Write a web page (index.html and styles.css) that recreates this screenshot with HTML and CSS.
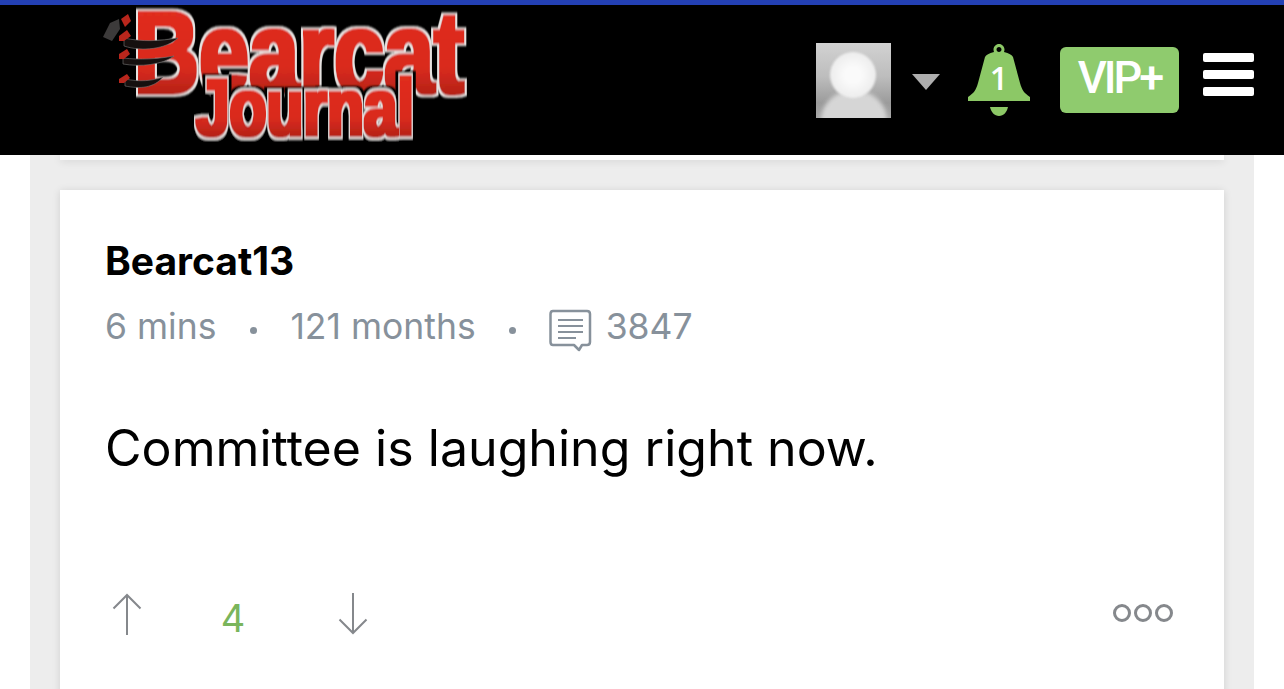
FILE: index.html
```html
<!DOCTYPE html>
<html lang="en">
<head>
    <meta charset="UTF-8">
    <meta name="viewport" content="width=device-width, initial-scale=1.0">
    <title>Bearcat Journal</title>
    <link rel="stylesheet" href="styles.css">
</head>
<body>
    <header class="site-header">
        <a class="logo" href="#">
            <svg width="380" height="150" viewBox="0 0 380 150">
                <defs>
                    <linearGradient id="logoRed" x1="0" y1="0" x2="0" y2="1">
                        <stop offset="0" stop-color="#e22d1f"/>
                        <stop offset="0.6" stop-color="#d92a1e"/>
                        <stop offset="1" stop-color="#92190f"/>
                    </linearGradient>
                    <filter id="logoEdge" x="-5%" y="-10%" width="110%" height="120%">
                        <feMorphology in="SourceGraphic" operator="dilate" radius="3 2" result="fat"/>
                        <feMorphology in="SourceAlpha" operator="dilate" radius="5 4" result="edge"/>
                        <feFlood flood-color="#e6e2e0"/>
                        <feComposite in2="edge" operator="in" result="white"/>
                        <feMerge result="all">
                            <feMergeNode in="white"/>
                            <feMergeNode in="fat"/>
                        </feMerge>
                        <feGaussianBlur in="all" stdDeviation="0.800"/>
                    </filter>
                    <filter id="logoEdgeDark" x="-8%" y="-15%" width="116%" height="130%">
                        <feMorphology in="SourceGraphic" operator="dilate" radius="2.500 1.500" result="fat"/>
                        <feMorphology in="SourceAlpha" operator="dilate" radius="4.500 3.500" result="edge"/>
                        <feMorphology in="SourceAlpha" operator="dilate" radius="8 6" result="outer"/>
                        <feFlood flood-color="#e6e2e0"/>
                        <feComposite in2="edge" operator="in" result="white"/>
                        <feFlood flood-color="#000"/>
                        <feComposite in2="outer" operator="in" result="black"/>
                        <feMerge result="all">
                            <feMergeNode in="black"/>
                            <feMergeNode in="white"/>
                            <feMergeNode in="fat"/>
                        </feMerge>
                        <feGaussianBlur in="all" stdDeviation="0.800"/>
                    </filter>
                </defs>
                <text class="logo-word" transform="translate(34 88) scale(0.775 1)">Bearcat</text>
                <text class="logo-word logo-word-small" transform="translate(96 130) scale(0.755 1)">Journal</text>
                <g class="logo-claws">
                    <path d="M24 33 C42 37 60 36 78 33 C66 44 42 47 24 41Z"/>
                    <path d="M23 53 C40 55 58 54 74 51 C62 60 40 62 23 59Z"/>
                    <path d="M25 74 C40 77 52 76 63 72 C54 83 40 84 25 81Z"/>
                </g>
                <path class="logo-smudge" d="M3 32 L10 18 L19 14 L20 24 L12 36Z"/>
                <path class="logo-nail" d="M21 14 L28 9 L31 16 L25 22Z"/>
                <path class="logo-nail" d="M19 31 L27 25 L31 31 L24 36 L19 36Z"/>
                <path class="logo-nail" d="M19 49 L27 44 L30 49 L24 54 L19 54Z"/>
                <path class="logo-nail" d="M19 74 L27 69 L30 73 L24 78 L19 78Z"/>
            </svg>
        </a>
        <div class="header-right">
            <div class="avatar"><div class="avatar-body"></div><div class="avatar-head"></div></div>
            <div class="caret"></div>
            <svg class="bell" width="62" height="72" viewBox="0 0 62 72">
                <path fill="#8cc866" fill-rule="evenodd" d="M31 0 C34 0 36.500 2.500 36.500 5.500 C36.500 6.500 36.300 7.300 36 8 C41 9 44 11 45 13 L52 39 C54 46 56 49 62 53 L62 57 L0 57 L0 53 C6 49 8 46 10 39 L17 13 C18 11 21 9 26 8 C25.700 7.300 25.500 6.500 25.500 5.500 C25.500 2.500 28 0 31 0Z M31 3 C29.600 3 28.500 4.100 28.500 5.500 C28.500 6.900 29.600 8 31 8 C32.400 8 33.500 6.900 33.500 5.500 C33.500 4.100 32.400 3 31 3Z"/>
                <path fill="#8cc866" d="M22 63 L40 63 C39 68 35.500 72 31 72 C26.500 72 23 68 22 63Z"/>
                <text class="bell-count" x="31" y="46" text-anchor="middle">1</text>
            </svg>
            <a class="vip" href="#">VIP+</a>
            <div class="hamburger"><span></span><span></span><span></span></div>
        </div>
    </header>

    <main class="content">
        <div class="card card-prev"></div>
        <article class="card">
            <div class="post-author">Bearcat13</div>
            <div class="post-meta">
                <span>6 mins</span>
                <i class="dot"></i>
                <span>121 months</span>
                <i class="dot"></i>
                <svg class="comment-icon" width="43" height="43" viewBox="0 0 43 43">
                    <path fill="none" stroke="#87919b" stroke-width="2.500" stroke-linejoin="round" d="M4 2 H38 Q41 2 41 5 V33 Q41 36 38 36 H33 L30 41 L25 36 H4 Q1.500 36 1.500 33 V5 Q1.500 2 4 2Z"/>
                    <path fill="none" stroke="#87919b" stroke-width="2" d="M9 11 H34 M9 17 H34 M9 23 H34 M9 29 H27"/>
                </svg>
                <span>3847</span>
            </div>
            <p class="post-body">Committee is laughing right now.</p>
            <div class="post-actions">
                <div class="votes">
                    <svg width="30" height="42" viewBox="0 0 30 42"><path fill="none" stroke="#85888c" stroke-width="2" d="M15 42 V2 M1.500 15.500 L15 2 L28.500 15.500"/></svg>
                    <span class="score">4</span>
                    <svg width="30" height="42" viewBox="0 0 30 42"><path fill="none" stroke="#85888c" stroke-width="2" d="M15 0 V40 M1.500 26.500 L15 40 L28.500 26.500"/></svg>
                </div>
                <div class="more"><i></i><i></i><i></i></div>
            </div>
        </article>
    </main>
</body>
</html>
```

FILE: styles.css
```css
html, body {
    margin: 0;
    padding: 0;
    height: 689px;
    overflow: hidden;
    background: #fff;
}
body {
    font-family: Inter, Lato, sans-serif;
    color: #000;
}
.site-header {
    height: 150px;
    border-top: 5px solid #2340b4;
    background: #000;
    display: flex;
    align-items: center;
    justify-content: space-between;
    padding-right: 30px;
    position: relative;
    z-index: 2;
}
.logo {
    display: block;
    margin-left: 100px;
    height: 150px;
}
.logo-word {
    font-family: "Liberation Sans", Arial, sans-serif;
    font-weight: 700;
    font-size: 116px;
    fill: url(#logoRed);
    filter: url(#logoEdge);
}
.logo-word-small {
    font-size: 80px;
    filter: url(#logoEdgeDark);
}
.logo-claws path {
    fill: #16100f;
    stroke: #777;
    stroke-width: 0.600px;
}
.logo-nail {
    fill: #b8261c;
}
.logo-smudge {
    fill: #3c3a3a;
}
.header-right {
    display: flex;
    align-items: center;
}
.avatar {
    width: 75px;
    height: 75px;
    margin-top: 1px;
    position: relative;
    overflow: hidden;
    background: linear-gradient(180deg, #d2d2d2, #bdbdbd 45%, #9b9b9b 80%, #a8a8a8);
}
.avatar-head {
    position: absolute;
    left: 14px;
    top: 9px;
    width: 46px;
    height: 46px;
    border-radius: 50%;
    background: radial-gradient(circle, #fafafa 25%, #e4e4e4 100%);
    filter: blur(1px);
}
.avatar-body {
    position: absolute;
    left: 5px;
    top: 47px;
    width: 66px;
    height: 60px;
    border-radius: 50%;
    background: #d6d6d6;
    filter: blur(2px);
}
.caret {
    width: 0;
    height: 0;
    margin-left: 21px;
    margin-right: 28px;
    margin-top: 3px;
    border-left: 14px solid transparent;
    border-right: 14px solid transparent;
    border-top: 16px solid #aeaeae;
}
.bell {
    display: block;
    margin-right: 30px;
}
.bell-count {
    font-family: "Open Sans", sans-serif;
    font-weight: 600;
    font-size: 32px;
    fill: #fff;
}
.vip {
    display: block;
    width: 119px;
    height: 66px;
    line-height: 62px;
    text-align: center;
    background: #8fcb6e;
    color: #fff;
    border-radius: 6px;
    font-family: Roboto, sans-serif;
    font-size: 45px;
    font-weight: 500;
    letter-spacing: -3px;
    text-decoration: none;
    margin-right: 24px;
}
.hamburger {
    display: flex;
    flex-direction: column;
    gap: 8px;
    width: 51px;
    margin-top: -11px;
}
.hamburger span {
    display: block;
    height: 9px;
    background: #fff;
    border-radius: 2px;
}
.content {
    margin: 0 30px;
    padding: 0 30px;
    background: #ededed;
    height: 534px;
}
.card {
    background: #fff;
    box-shadow: 0 1px 8px rgba(0, 0, 0, 0.12);
    padding: 46px 46px 80px 45px;
}
.card-prev {
    height: 5px;
    padding: 0;
    margin-bottom: 30px;
}
.post-author {
    font-size: 39px;
    font-weight: 700;
    line-height: 50px;
}
.post-meta {
    display: flex;
    align-items: center;
    color: #87919b;
    font-size: 35.500px;
    line-height: 44px;
    margin-top: 16px;
}
.dot {
    width: 7px;
    height: 7px;
    border-radius: 50%;
    background: #87919b;
    margin: 6px 33.500px 0;
}
.comment-icon {
    display: block;
    margin-left: -1px;
    margin-right: 14px;
    margin-top: 7px;
}
.post-body {
    font-size: 50.100px;
    line-height: 60px;
    margin: 66px 0 0;
}
.post-actions {
    display: flex;
    justify-content: space-between;
    align-items: flex-start;
    margin-top: 109px;
    padding-right: 5px;
}
.votes {
    display: flex;
    align-items: center;
    padding-left: 7px;
}
.votes svg {
    display: block;
}
.score {
    font-family: Inter, sans-serif;
    font-size: 38px;
    color: #7ab55c;
    width: 196px;
    text-align: center;
    margin-top: 8px;
    padding-right: 14px;
    box-sizing: border-box;
}
.more {
    display: flex;
    gap: 3px;
    margin-top: 17px;
}
.more i {
    display: block;
    width: 18px;
    height: 18px;
    box-sizing: border-box;
    border: 3.500px solid #85888c;
    border-radius: 50%;
}
```
